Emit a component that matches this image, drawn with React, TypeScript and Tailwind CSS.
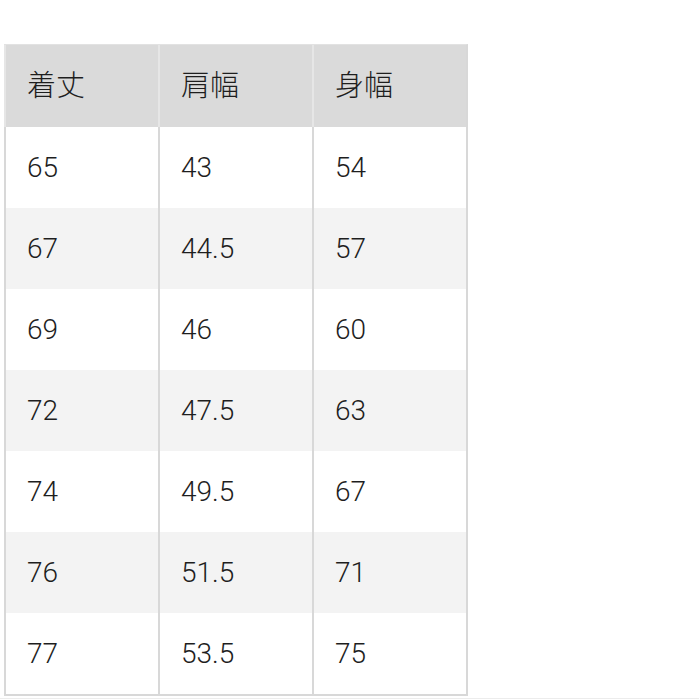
const headers = ['着丈', '肩幅', '身幅'];

const rows = [
  ['65', '43', '54'],
  ['67', '44.5', '57'],
  ['69', '46', '60'],
  ['72', '47.5', '63'],
  ['74', '49.5', '67'],
  ['76', '51.5', '71'],
  ['77', '53.5', '75'],
];

export default function App() {
  return (
    <div className="w-[699px] h-[699px] bg-white overflow-hidden pt-[44px]">
      <div className="pl-[4px]">
        <div className="w-[464px] border-t border-[#e2e2e2] border-r-2 border-r-[#d8d8d8] border-b-2 border-b-[#d8d8d8]">
          {/* header */}
          <div className="grid grid-cols-3 h-[82px] bg-[#dadada]">
            {headers.map((h) => (
              <div
                key={h}
                className="flex items-center pl-[21px] pb-[5px] border-l-2 border-[#e6e6e6] text-[29px] font-light text-[#1e1e1e] font-['Noto_Sans_CJK_JP','Noto_Sans',sans-serif]"
              >
                {h}
              </div>
            ))}
          </div>

          {/* body */}
          {rows.map((r, i) => (
            <div
              key={i}
              className={`grid grid-cols-3 h-[81px] ${i % 2 === 1 ? 'bg-[#f3f3f3]' : 'bg-white'}`}
            >
              {r.map((v, j) => (
                <div
                  key={j}
                  className="flex items-center pl-[21px] border-l-2 border-[#d8d8d8] text-[28px] font-light text-[#1e1e1e] font-['Roboto',sans-serif]"
                >
                  {v}
                </div>
              ))}
            </div>
          ))}
        </div>
      </div>
      <div className="mt-[2px] h-px bg-[#ececec]" />
    </div>
  );
}
